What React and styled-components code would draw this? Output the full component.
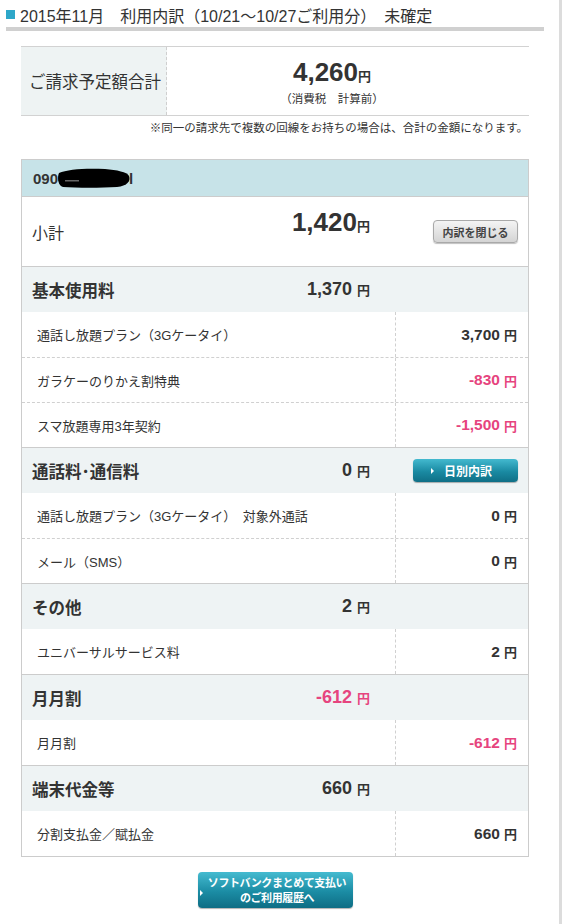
import { createGlobalStyle, styled, css } from 'styled-components';

const GlobalStyle = createGlobalStyle`
    body {
        margin: 0;
        background: #fff;
        font-family: 'Liberation Sans', 'Noto Sans CJK JP', sans-serif;
        color: #333;
    }
`;

const sections = [
    {
        title: '基本使用料',
        amount: '1,370',
        items: [
            { label: '通話し放題プラン（3Gケータイ）', amount: '3,700' },
            { label: 'ガラケーのりかえ割特典', amount: '-830', neg: true },
            { label: 'スマ放題専用3年契約', amount: '-1,500', neg: true },
        ],
    },
    {
        title: '通話料･通信料',
        amount: '0',
        daily: true,
        items: [
            { label: '通話し放題プラン（3Gケータイ）　対象外通話', amount: '0' },
            { label: 'メール（SMS）', amount: '0' },
        ],
    },
    {
        title: 'その他',
        amount: '2',
        items: [{ label: 'ユニバーサルサービス料', amount: '2' }],
    },
    {
        title: '月月割',
        amount: '-612',
        neg: true,
        items: [{ label: '月月割', amount: '-612', neg: true }],
    },
    {
        title: '端末代金等',
        amount: '660',
        items: [{ label: '分割支払金／賦払金', amount: '660' }],
    },
];

const Redaction = () => (
    <svg width="74" height="22" viewBox="0 0 74 22">
        <path
            d="M2 6 C10 2 30 1 48 2 C60 3 70 5 72 9 C74 14 70 19 60 20 C44 21 20 21 6 20 C1 19 0 10 2 6 Z"
            fill="#000"
        />
        <rect x="8" y="13" width="14" height="1.5" fill="#666" />
    </svg>
);

const App = () => {
    return (
        <Page>
            <GlobalStyle />
            <TitleBar>
                <TitleMark />
                <Title>2015年11月　利用内訳（10/21～10/27ご利用分）　未確定</Title>
            </TitleBar>
            <Content>
                <Summary>
                    <SummaryLabel>ご請求予定額合計</SummaryLabel>
                    <SummaryValue>
                        <BigAmount>
                            4,260<Yen>円</Yen>
                        </BigAmount>
                        <TaxNote>（消費税　計算前）</TaxNote>
                    </SummaryValue>
                </Summary>
                <Note>※同一の請求先で複数の回線をお持ちの場合は、合計の金額になります。</Note>
                <Table>
                    <LineHead>
                        090-<Redaction />l
                    </LineHead>
                    <SubtotalRow>
                        <LeftCell>
                            <SubtotalLabel>小計</SubtotalLabel>
                            <SubtotalAmount>
                                1,420<Yen>円</Yen>
                            </SubtotalAmount>
                        </LeftCell>
                        <RightCell>
                            <GreyButton>内訳を閉じる</GreyButton>
                        </RightCell>
                    </SubtotalRow>
                    {sections.map((s) => (
                        <Section key={s.title}>
                            <HeadRow>
                                <LeftCell>
                                    <HeadLabel>{s.title}</HeadLabel>
                                    <HeadAmount $neg={s.neg}>
                                        {s.amount} <Yen>円</Yen>
                                    </HeadAmount>
                                </LeftCell>
                                <RightCell>
                                    {s.daily && (
                                        <TealButton>
                                            <Arrow $gap={10} />
                                            日別内訳
                                        </TealButton>
                                    )}
                                </RightCell>
                            </HeadRow>
                            {s.items.map((it, i) => (
                                <ItemRow key={it.label} $first={i === 0}>
                                    <ItemLabel>{it.label}</ItemLabel>
                                    <ItemAmount $neg={it.neg}>
                                        {it.amount} <Yen>円</Yen>
                                    </ItemAmount>
                                </ItemRow>
                            ))}
                        </Section>
                    ))}
                </Table>
                <HistoryButton>
                    <Arrow $gap={5} $low />
                    <HistoryText>
                        <span>ソフトバンクまとめて支払い</span>
                        <span>のご利用履歴へ</span>
                    </HistoryText>
                </HistoryButton>
            </Content>
        </Page>
    );
};

export default App;

const pink = '#e6447e';

const Page = styled.div`
    width: 562px;
    min-height: 924px;
    box-sizing: border-box;
    border-right: 3px solid #dcdcdc;
`;

const TitleBar = styled.div`
    display: flex;
    align-items: center;
    height: 25px;
    padding-top: 2px;
    margin: 0 15px 0 6px;
    border-bottom: 4px solid #d0d0d0;
`;

const TitleMark = styled.span`
    width: 9px;
    height: 9px;
    background: #2ea7c9;
    margin-right: 5px;
    flex: 0 0 auto;
`;

const Title = styled.h1`
    margin: 0;
    font-size: 16px;
    font-weight: normal;
    white-space: nowrap;
    color: #333;
`;

const Content = styled.div`
    padding: 0 30px 0 21px;
`;

const Summary = styled.div`
    display: flex;
    margin-top: 15px;
    height: 70px;
    box-sizing: border-box;
    border-top: 1px solid #d2d2d2;
    border-bottom: 1px solid #d2d2d2;
`;

const SummaryLabel = styled.div`
    width: 146px;
    display: flex;
    align-items: center;
    padding-left: 8px;
    box-sizing: border-box;
    background: #eef3f3;
    border-right: 1px dashed #cfcfcf;
    font-size: 16.5px;
    white-space: nowrap;
`;

const SummaryValue = styled.div`
    flex: 1;
    display: flex;
    flex-direction: column;
    align-items: center;
    justify-content: center;
    padding-right: 32px;
`;

const Yen = styled.span`
    font-size: 13px;
    font-weight: bold;
`;

const BigAmount = styled.div`
    font-size: 26px;
    font-weight: bold;
    line-height: 28px;
    margin-top: 2px;
`;

const TaxNote = styled.div`
    font-size: 11.5px;
    line-height: 14px;
    margin-top: 1px;
`;

const Note = styled.div`
    text-align: right;
    font-size: 11.5px;
    line-height: 16px;
    margin: 4px 1px 23px 0;
    white-space: nowrap;
`;

const Table = styled.div`
    border: 1px solid #cccccc;
`;

const LineHead = styled.div`
    display: flex;
    align-items: center;
    height: 36px;
    padding-left: 11px;
    background: #c7e3e8;
    font-size: 15px;
    font-weight: bold;

    svg {
        margin: 0 -2px 0 -6px;
    }
`;

const rowGrid = css`
    display: grid;
    grid-template-columns: 373px 1fr;
`;

const SubtotalRow = styled.div`
    ${rowGrid}
    height: 70px;
    box-sizing: border-box;
    border-top: 1px solid #cccccc;
    background: #fff;
`;

const LeftCell = styled.div`
    display: flex;
    align-items: center;
    justify-content: space-between;
    padding: 0 25px 0 10px;
`;

const RightCell = styled.div`
    display: flex;
    align-items: center;
    justify-content: flex-end;
    padding-right: 10px;
`;

const SubtotalLabel = styled.div`
    font-size: 16px;
`;

const SubtotalAmount = styled.div`
    font-size: 26px;
    font-weight: bold;
    margin-bottom: 19px;
`;

const GreyButton = styled.button`
    width: 85px;
    height: 23px;
    padding: 0;
    border: 1px solid #a9a9a9;
    border-radius: 4px;
    background: linear-gradient(#f4f4f4, #d4d4d4);
    box-shadow: 0 1px 1px rgba(0, 0, 0, 0.25);
    font-family: 'Noto Sans CJK JP', sans-serif;
    font-size: 11px;
    font-weight: bold;
    color: #444;
`;

const Section = styled.div`
    border-top: 1px solid #cccccc;
`;

const HeadRow = styled.div`
    ${rowGrid}
    height: 45px;
    background: #eef3f4;
`;

const HeadLabel = styled.div`
    font-size: 16.5px;
    font-weight: bold;
`;

const HeadAmount = styled.div`
    font-size: 18px;
    font-weight: bold;
    color: ${(p) => (p.$neg ? pink : '#333')};
`;

const TealButton = styled.button`
    display: flex;
    align-items: center;
    justify-content: center;
    width: 105px;
    height: 23px;
    padding: 0 8px 0 0;
    border: none;
    border-radius: 4px;
    background: linear-gradient(#43b9cf, #1a8aa2 55%, #0f6f86);
    box-shadow: 0 1px 1px rgba(0, 0, 0, 0.3);
    font-family: 'Noto Sans CJK JP', sans-serif;
    font-size: 12px;
    font-weight: bold;
    color: #fff;
`;

const Arrow = styled.span`
    flex: 0 0 auto;
    width: 0;
    height: 0;
    border-left: 3px solid #fff;
    border-top: 3px solid transparent;
    border-bottom: 3px solid transparent;
    margin-right: ${(p) => p.$gap}px;
    margin-top: ${(p) => (p.$low ? 6 : 0)}px;
`;

const ItemRow = styled.div`
    ${rowGrid}
    height: 45px;
    box-sizing: border-box;
    border-top: ${(p) => (p.$first ? 'none' : '1px dashed #d0d0d0')};
    background: #fff;
`;

const ItemLabel = styled.div`
    display: flex;
    align-items: center;
    padding-left: 15px;
    font-size: 13px;
    white-space: nowrap;
    color: #333;
`;

const ItemAmount = styled.div`
    display: flex;
    align-items: center;
    justify-content: flex-end;
    gap: 4px;
    padding-right: 11px;
    border-left: 1px dashed #d0d0d0;
    font-size: 15.5px;
    font-weight: bold;
    color: ${(p) => (p.$neg ? pink : '#333')};
`;

const HistoryButton = styled.button`
    display: flex;
    align-items: center;
    justify-content: center;
    width: 155px;
    height: 36px;
    margin: 15px auto 0;
    padding: 0 4px 0 0;
    border: none;
    border-radius: 4px;
    background: linear-gradient(#45bbd0, #1b8ca4 55%, #0e6d84);
    box-shadow: 0 1px 1px rgba(0, 0, 0, 0.3);
    font-family: 'Noto Sans CJK JP', sans-serif;
    font-size: 11px;
    font-weight: bold;
    letter-spacing: -0.4px;
    color: #fff;
`;

const HistoryText = styled.span`
    display: flex;
    flex-direction: column;
    align-items: center;
    line-height: 15px;
`;
